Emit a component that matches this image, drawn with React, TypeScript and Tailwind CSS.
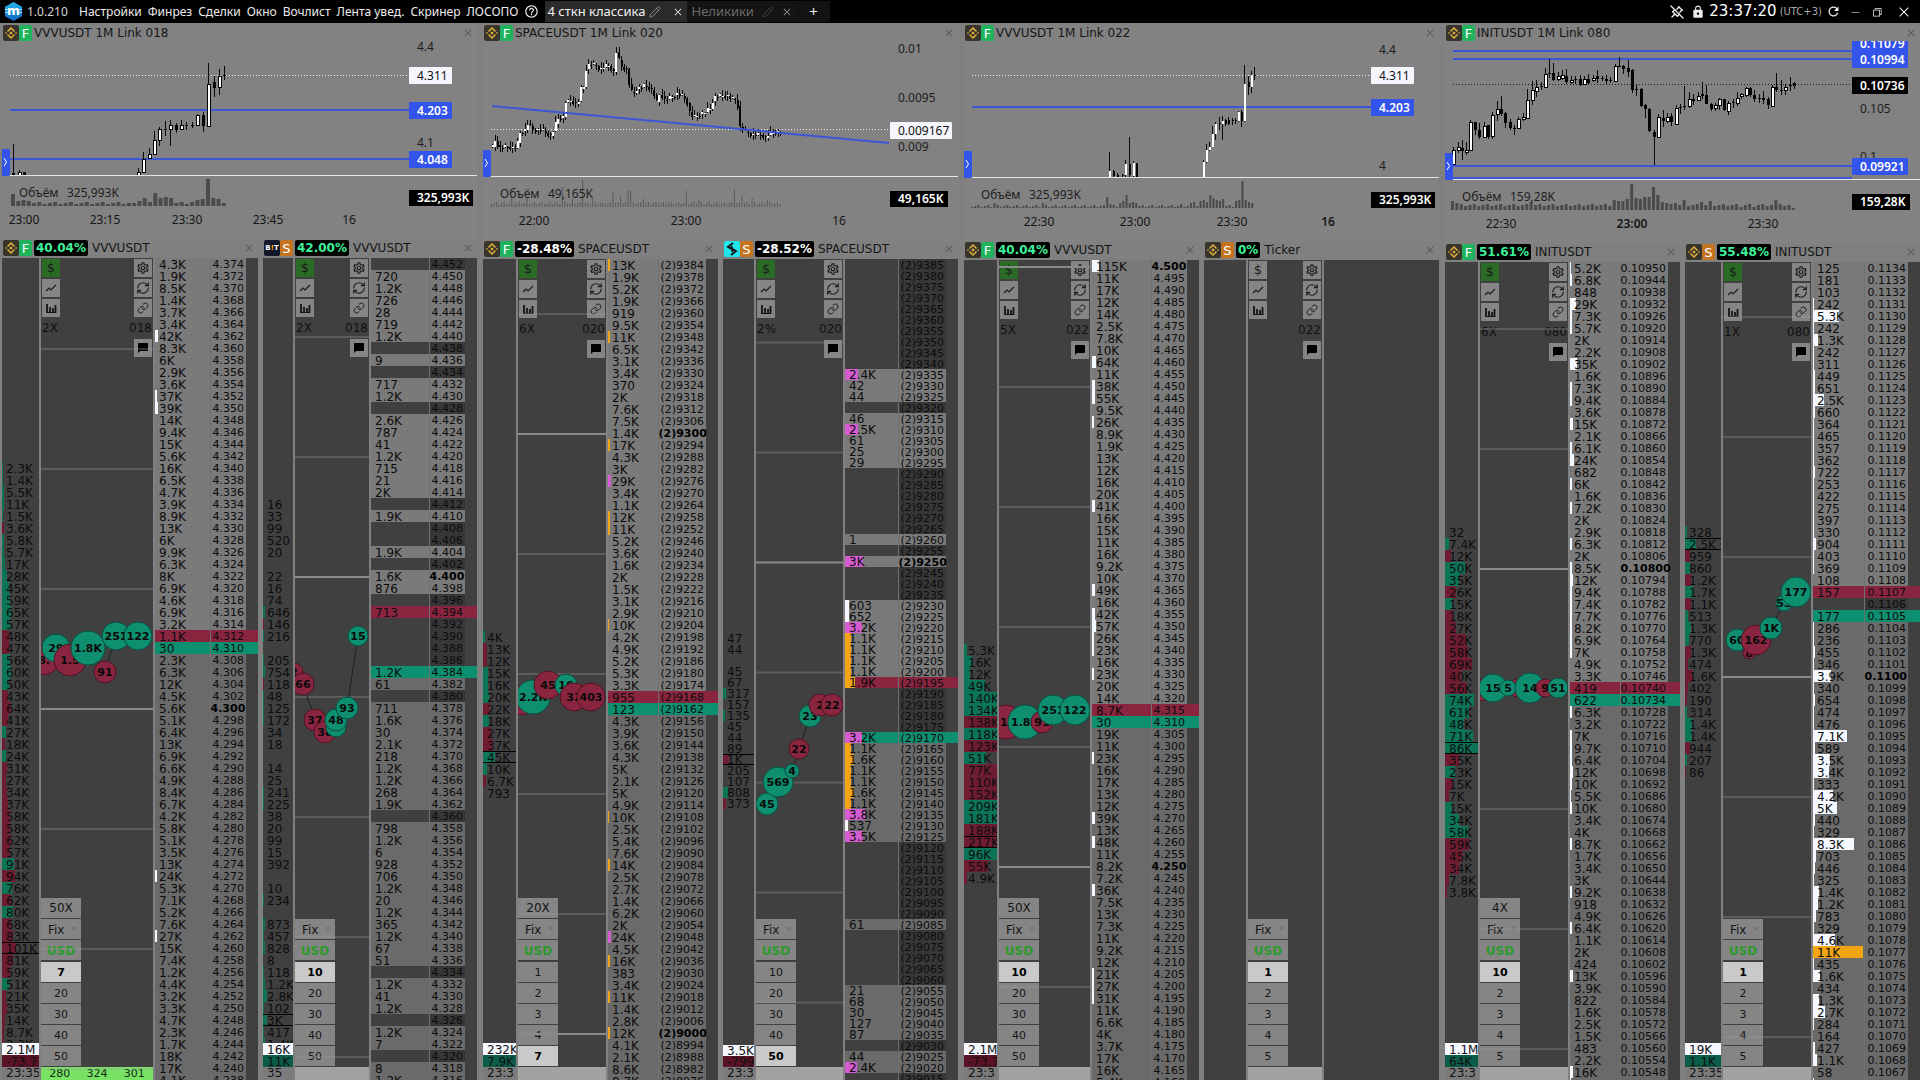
import clsx from "clsx";
import { Link, Pencil, RefreshCw } from "lucide-react";
import { MdChatBubble, MdHelpOutline, MdLock, MdOutlineSettings, MdRefresh } from "react-icons/md";
import { TbPinnedOff } from "react-icons/tb";
import { VscChromeClose, VscChromeMinimize, VscChromeRestore } from "react-icons/vsc";

type Side = "g" | "r";
type Exchange = "binance" | "bitget" | "bybit";
type Bubble = [label: string, cx: number, cy: number, r: number, side: Side];
type Candle = [x: number, high: number, low: number, top: number, bottom: number, up: number];
type Tag = { y: number; text: string; kind: "plain" | "white" | "blue" | "black"; w?: number };

type BookData = {
  exchange: Exchange;
  market: "F" | "S";
  change: string;
  ticker: string;
  scale: string;
  link: string;
  active: boolean;
  start?: number;
  step?: number;
  digits?: number;
  prefix?: string;
  levels: string;
  ask: number;
  bid: number;
  round: number[];
  grid: number;
  small?: boolean;
  clusterFrom: number;
  clusterMax: number;
  clusters: string;
  total?: [string, string, Side, string];
  bubbles: Bubble[];
  leverage?: string;
  sizes: string[];
  size: number;
  stats?: string[];
  clusterW: string;
  ladderW: string;
  priceW: string;
};

type ChartData = {
  title: string;
  dx: number;
  height: string;
  sep: number;
  tags: Tag[];
  lines: number[];
  trend?: [number, number, number, number];
  last: number;
  lastDark?: boolean;
  candles: Candle[];
  bodyW: number;
  volume: string;
  volBars: number[];
  volStep: number;
  volW: number;
  times: [number, string, boolean?][];
};

/* --------------------------------------------------------
   CHART DATA
---------------------------------------------------------*/
const vvv18: Candle[] = [
  [13, 144, 175, 173, 175, 0], [19, 170, 175, 172, 175, 1], [24, 172, 175, 172, 175, 0],
  [138, 168, 175, 172, 175, 1], [143, 152, 173, 159, 172, 1], [149, 148, 158, 154, 158, 1],
  [154, 131, 155, 140, 154, 1], [159, 127, 146, 129, 140, 1], [165, 121, 136, 129, 130, 0],
  [170, 120, 146, 125, 129, 1], [176, 123, 133, 125, 130, 0], [181, 120, 130, 125, 129, 1],
  [186, 122, 130, 125, 126, 0], [192, 122, 128, 125, 126, 0], [197, 114, 126, 115, 125, 1],
  [203, 112, 132, 115, 126, 0], [208, 63, 127, 84, 126, 1], [214, 76, 97, 82, 88, 0],
  [219, 69, 95, 76, 87, 1], [224, 66, 80, 75, 76, 0],
];

const vvv22: Candle[] = [
  [149, 152, 177, 171, 177, 1], [153, 170, 177, 171, 176, 0], [157, 173, 177, 175, 177, 0],
  [162, 174, 177, 175, 176, 0], [165, 160, 177, 164, 175, 1], [169, 137, 177, 164, 175, 0],
  [173, 161, 177, 163, 176, 1], [176, 163, 177, 163, 177, 0], [243, 160, 177, 162, 177, 1],
  [246, 144, 163, 150, 162, 1], [249, 142, 151, 147, 150, 1], [252, 126, 147, 134, 147, 1],
  [255, 122, 140, 124, 134, 1], [259, 117, 130, 123, 124, 0], [262, 116, 140, 121, 124, 1],
  [265, 119, 126, 120, 124, 0], [268, 117, 125, 120, 124, 0], [272, 118, 125, 120, 121, 0],
  [275, 118, 124, 120, 121, 0], [278, 111, 122, 112, 121, 1], [281, 110, 127, 112, 121, 0],
  [284, 65, 122, 84, 121, 1], [288, 76, 95, 82, 87, 0], [291, 71, 93, 75, 87, 1], [294, 67, 80, 75, 76, 0],
];

const init80: Candle[] = [
  [13, 147, 164, 150, 164, 1], [18, 142, 153, 147, 150, 1], [22, 140, 160, 148, 151, 0], [26, 142, 155, 150, 152, 1],
  [30, 120, 151, 122, 150, 1], [35, 122, 135, 122, 130, 0], [39, 123, 139, 130, 137, 0], [44, 122, 138, 126, 137, 1],
  [48, 125, 139, 125, 137, 0], [52, 112, 139, 115, 136, 1], [57, 101, 121, 109, 114, 1], [61, 96, 116, 109, 114, 0],
  [65, 112, 128, 113, 123, 0], [70, 119, 130, 122, 128, 0], [74, 125, 135, 128, 129, 0], [78, 117, 129, 119, 128, 1],
  [83, 113, 121, 117, 119, 1], [87, 89, 118, 100, 118, 1], [92, 81, 105, 90, 100, 1], [96, 80, 97, 87, 91, 1],
  [101, 82, 90, 86, 87, 0], [105, 68, 88, 74, 87, 1], [109, 59, 78, 73, 74, 0], [113, 63, 81, 73, 80, 0],
  [118, 72, 81, 76, 79, 1], [122, 70, 80, 75, 78, 1], [126, 69, 84, 76, 82, 0], [131, 76, 84, 80, 82, 1],
  [135, 76, 84, 79, 80, 0], [140, 75, 86, 79, 85, 0], [144, 76, 84, 79, 84, 1], [148, 74, 84, 79, 83, 0],
  [153, 75, 82, 78, 80, 1], [157, 70, 83, 76, 79, 0], [162, 76, 81, 78, 79, 0], [166, 75, 84, 79, 81, 0],
  [170, 77, 83, 80, 81, 0], [175, 64, 82, 66, 81, 1], [179, 57, 67, 66, 67, 0], [183, 65, 74, 66, 69, 0],
  [188, 60, 77, 68, 72, 0], [192, 69, 93, 70, 90, 0], [196, 85, 96, 89, 90, 0], [201, 88, 107, 89, 106, 0],
  [205, 104, 118, 105, 109, 0], [209, 108, 132, 109, 131, 0], [214, 130, 165, 132, 137, 0], [218, 114, 137, 117, 137, 1],
  [223, 110, 127, 118, 121, 0], [227, 113, 123, 117, 121, 1], [231, 113, 126, 116, 122, 0], [236, 105, 125, 108, 124, 1],
  [240, 104, 114, 107, 108, 0], [244, 86, 110, 106, 107, 0], [249, 92, 108, 99, 106, 1], [253, 94, 105, 99, 101, 0],
  [258, 92, 101, 96, 100, 1], [262, 82, 99, 94, 96, 0], [266, 85, 104, 95, 104, 0], [271, 103, 111, 104, 109, 0],
  [275, 103, 111, 105, 108, 1], [279, 98, 110, 99, 105, 1], [284, 99, 111, 99, 110, 0], [288, 101, 115, 103, 111, 1],
  [293, 99, 108, 102, 103, 0], [297, 92, 106, 98, 103, 1], [301, 93, 99, 94, 96, 1], [306, 87, 97, 88, 95, 1],
  [310, 87, 97, 88, 95, 0], [314, 90, 102, 95, 99, 0], [319, 94, 103, 98, 99, 0], [323, 91, 104, 98, 100, 0],
  [328, 97, 109, 99, 105, 0], [332, 85, 107, 87, 106, 1], [336, 73, 92, 87, 90, 0], [341, 80, 95, 90, 91, 0],
  [345, 84, 95, 87, 90, 1], [350, 77, 91, 85, 86, 0], [354, 82, 89, 83, 86, 0],
];

// dense chart: closes are interpolated between the turning points
const spacePath = [
  [12, 147], [15, 140], [18, 148], [24, 147], [36, 148], [40, 132], [45, 130], [48, 123], [52, 130], [60, 130],
  [66, 133], [71, 137], [75, 124], [78, 119], [83, 117], [85, 102], [92, 101], [97, 106], [100, 90], [104, 86],
  [106, 65], [112, 64], [120, 69], [128, 65], [134, 73], [136, 52], [141, 67], [146, 68], [149, 86], [152, 95],
  [157, 88], [165, 86], [172, 90], [177, 104], [180, 91], [183, 100], [190, 98], [196, 94], [203, 97], [207, 103],
  [210, 115], [214, 117], [222, 113], [230, 109], [233, 97], [240, 96], [247, 96], [254, 100], [257, 101],
  [259, 126], [264, 131], [272, 135], [281, 135], [286, 139], [289, 133], [298, 132], [303, 131],
];

function priceAt(x: number) {
  const i = Math.max(1, spacePath.findIndex((p) => p[0] >= x));
  const [x0, y0] = spacePath[i - 1];
  const [x1, y1] = spacePath[i];
  return y0 + ((y1 - y0) * (x - x0)) / (x1 - x0);
}

const space20: Candle[] = Array.from({ length: 115 }, (_, i) => {
  const x = 12 + i * 2.53;
  const open = priceAt(Math.max(12, x - 2.53));
  const close = priceAt(x) + ((i * 7) % 5) - 2;
  const top = Math.min(open, close);
  const bottom = Math.max(open, close, top + 1);
  return [x, top - 1 - ((i * 5) % 6), bottom + 1 + ((i * 3) % 5), top, bottom, close < open ? 1 : 0];
});

function bars(count: number, base: number, peaks: Record<number, number>) {
  return Array.from({ length: count }, (_, i) => peaks[i] ?? base + ((i * 7) % 3));
}

const charts: ChartData[] = [
  {
    title: "VVVUSDT 1M Link 018",
    dx: 2,
    height: "h-[199px]",
    sep: 175,
    lines: [110, 159],
    last: 76,
    candles: vvv18,
    bodyW: 3,
    tags: [
      { y: 47, text: "4.4", kind: "plain" },
      { y: 143, text: "4.1", kind: "plain" },
      { y: 76, text: "4.311", kind: "white", w: 43 },
      { y: 111, text: "4.203", kind: "blue", w: 43 },
      { y: 160, text: "4.048", kind: "blue", w: 43 },
    ],
    volume: "325,993K",
    volBars: bars(41, 2, {
      0: 12, 1: 5, 2: 6, 3: 5, 23: 3, 24: 5, 25: 8, 26: 4, 27: 13, 28: 8, 29: 9, 30: 8, 31: 3, 34: 4, 35: 6, 36: 7,
      37: 27, 38: 8, 39: 7, 40: 3,
    }),
    volStep: 5.27,
    volW: 4,
    times: [[24, "23:00"], [105, "23:15"], [187, "23:30"], [268, "23:45"], [349, "16"]],
  },
  {
    title: "SPACEUSDT 1M Link 020",
    dx: 3,
    height: "h-[200px]",
    sep: 176,
    lines: [],
    trend: [12, 106, 409, 143],
    last: 130,
    candles: space20,
    bodyW: 2,
    tags: [
      { y: 49, text: "0.01", kind: "plain" },
      { y: 98, text: "0.0095", kind: "plain" },
      { y: 147, text: "0.009", kind: "plain" },
      { y: 131, text: "0.009167", kind: "white", w: 62 },
    ],
    volume: "49,165K",
    volBars: bars(115, 3, {
      8: 10, 14: 9, 28: 20, 32: 9, 36: 27, 40: 9, 48: 15, 51: 11, 54: 17, 55: 16, 60: 8, 77: 16, 82: 7, 96: 18, 99: 11,
      103: 9, 109: 7,
    }),
    volStep: 2.53,
    volW: 1,
    times: [[54, "22:00"], [206, "23:00"], [359, "16"]],
  },
  {
    title: "VVVUSDT 1M Link 022",
    dx: 4,
    height: "h-[201px]",
    sep: 177,
    lines: [107],
    last: 76,
    candles: vvv22,
    bodyW: 2,
    tags: [
      { y: 50, text: "4.4", kind: "plain" },
      { y: 166, text: "4", kind: "plain" },
      { y: 76, text: "4.311", kind: "white", w: 43 },
      { y: 108, text: "4.203", kind: "blue", w: 43 },
    ],
    volume: "325,993K",
    volBars: bars(88, 1, {
      7: 5, 22: 5, 42: 11, 43: 4, 46: 5, 47: 7, 48: 13, 49: 5, 50: 6, 51: 5, 65: 4, 68: 5, 69: 6, 71: 7, 72: 8, 73: 6,
      74: 13, 75: 10, 76: 8, 77: 7, 78: 9, 82: 7, 83: 8, 84: 27, 85: 8, 86: 6, 87: 5,
    }),
    volStep: 3.22,
    volW: 2,
    times: [[79, "22:30"], [175, "23:00"], [272, "23:30"], [368, "16", true]],
  },
  {
    title: "INITUSDT 1M Link 080",
    dx: 5,
    height: "h-[203px]",
    sep: 179,
    lines: [51, 59, 166, 178],
    last: 85,
    lastDark: true,
    candles: init80,
    bodyW: 3,
    tags: [
      { y: 109, text: "0.105", kind: "plain" },
      { y: 157, text: "0.1", kind: "plain" },
      { y: 44, text: "0.11079", kind: "blue", w: 56 },
      { y: 60, text: "0.10994", kind: "blue", w: 56 },
      { y: 86, text: "0.10736", kind: "black", w: 56 },
      { y: 167, text: "0.09921", kind: "blue", w: 56 },
    ],
    volume: "159,28K",
    volBars: bars(79, 4, {
      0: 9, 1: 7, 18: 8, 37: 10, 38: 9, 39: 9, 40: 11, 41: 26, 42: 12, 43: 11, 44: 13, 45: 13, 46: 23, 47: 15, 48: 8,
      49: 7, 51: 7, 53: 10, 57: 8, 59: 9, 66: 3, 69: 3, 74: 10, 75: 6, 76: 4, 77: 5, 78: 2,
    }),
    volStep: 4.37,
    volW: 3,
    times: [[61, "22:30"], [192, "23:00", true], [323, "23:30"]],
  },
];

/* --------------------------------------------------------
   ORDER BOOK DATA
   level: volume[/colour+bar width], "-" is an empty level
---------------------------------------------------------*/
const bookGroups: { cols: string; books: BookData[] }[] = [
  {
    cols: "grid-cols-[256fr_214fr]",
    books: [
      {
        exchange: "binance", market: "F", change: "40.04%", ticker: "VVVUSDT", scale: "2X", link: "018", active: true,
        start: 4.374, step: 0.002, digits: 3,
        levels:
          "4.3K 1.9K 8.5K 1.4K 3.7K 3.4K 42K/w3 8.3K 6K 2.9K 3.6K 37K/w2 39K/w3 14K 9.4K 15K 5.6K 16K 6.5K 4.7K 3.9K 8.9K 13K 6K 9.9K 6.3K 8K 6.9K 4.6K 6.9K 3.2K 1.1K 30 2.3K 6.3K 12K 4.5K 5.6K 5.1K 6.4K 13K 6.9K 6.6K 4.9K 8.4K 6.7K 4.2K 5.8K 5.1K 3.5K 13K 24K/w2 5.3K 7.1K 5.2K 7.6K 27K/w2 15K 7.4K 1.2K 4.4K 3.2K 3.3K 4.7K 2.3K 1.7K 18K 17K 4.1K",
        ask: 31, bid: 32, round: [37], grid: 7,
        clusterFrom: 17, clusterMax: 300,
        clusters:
          "2.3K/g 1.4K/g 5.5K/g 11K/g 1.5K/g 3.6K/r 5.8K/g 5.7K/g 17K/g 28K/g 45K/g 59K/g 65K/g 57K/g 48K/r 47K/r 56K/g 60K/g 50K/g 43K/r 64K/r 41K/r 27K/g 18K/r 24K/g 31K/r 27K/r 34K/r 37K/r 58K/r 58K/r 62K/r 57K/r 91K/g 94K/r 76K/g 62K/r 80K/g 68K/r 83K/r 101K/r! 81K/r 59K/r 51K/g 21K/r 35K/r 14K/r 8.7K/r 3.3K/r",
        total: ["2.1M", "-73.7", "r", "23:35"],
        bubbles: [
          ["8.", 3, 402, 15, "r"], ["29", 15, 390, 14, "g"], ["1.5", 29, 402, 16, "r"], ["1.8K", 47, 390, 17, "g"],
          ["91", 64, 414, 11, "r"], ["251", 75, 378, 14, "g"], ["122", 97, 378, 14, "g"],
        ],
        leverage: "50X", sizes: ["7", "20", "30", "40", "50"], size: 0, stats: ["280", "324", "301"],
        clusterW: "w-[39px]", ladderW: "w-[105px]", priceW: "w-9",
      },
      {
        exchange: "bitget", market: "S", change: "42.00%", ticker: "VVVUSDT", scale: "2X", link: "018", active: true,
        start: 4.452, step: 0.002, digits: 3,
        levels:
          "- 720 1.2K 726 28 719 1.2K - 9 - 717 1.2K - 2.6K 787 41 1.2K 715 21 2K - 1.9K - - 1.9K - 1.6K 876 - 713 - - - - 1.2K 61 - 711 1.6K 30 2.1K 218 1.2K 1.2K 268 1.9K - 798 1.2K 6 928 706 1.2K 20 1.2K 365 1.2K 67 51 - 1.2K 41 1.2K - 1.2K 7 - 8 1.2K",
        ask: 29, bid: 34, round: [26], grid: 6,
        clusterFrom: 20, clusterMax: 30,
        clusters:
          "16 33 99 520 20 - 22 16 74 646/g 146/r 216/g - 205/g 754/g 118/r 48/g 125/g 172/g 34 18 - 14 25 241/g 225/g 38 20 99 15 392 - 10 234/g - 873/g 457/g 828/g 8 118/g 1.2K/g 2.8K/g 102/g 3K/g! 417/g 1.4K/g",
        total: ["16K", "11K", "g", "35"],
        bubbles: [
          ["2", -1, 414, 9, "r"], ["66", 8, 426, 11, "r"], ["37", 20, 462, 11, "r"], ["38", 30, 474, 11, "r"],
          ["", 41, 469, 10, "g"], ["48", 41, 462, 11, "g"], ["93", 52, 450, 11, "g"], ["15", 63, 378, 10, "g"],
        ],
        sizes: ["10", "20", "30", "40", "50"], size: 0,
        clusterW: "w-8", ladderW: "w-[108px]", priceW: "w-9",
      },
    ],
  },
  {
    cols: "grid-cols-2",
    books: [
      {
        exchange: "binance", market: "F", change: "-28.48%", ticker: "SPACEUSDT", scale: "6X", link: "020", active: true,
        start: 9384, step: 6, digits: 0, prefix: "(2)",
        levels:
          "13K/o2 1.9K 5.2K 1.9K 919 9.5K 11K/o2 6.5K 3.1K 3.4K 370 2K 7.6K 7.5K 1.4K 17K/o2 4.3K 3K 29K/p3 3.4K 1.1K 12K/o2 11K/o2 5.2K 3.6K 1.6K 2K 1.5K 3.1K 2.9K 10K/o1 4.2K 4.9K 5.2K 5.3K 3.3K 955 123 4.3K 3.9K 3.6K 4.3K 5K 2.1K 5K 4.9K 10K/o1 2.5K 5.4K 7.6K 14K/o2 2.5K 2.7K 1.4K 6.2K 2K 24K/p3 4.5K 16K/o2 383 3.4K 11K/o2 1.4K 2.8K 12K/o2 4.1K 2.1K 8.6K 8.7K",
        ask: 36, bid: 37, round: [14, 64], grid: 4,
        clusterFrom: 31, clusterMax: 130,
        clusters: "4K/g 13K/r 12K/r 15K/g 16K/g 20K/g 22K/r 18K/g 27K/r 37K/r 45K/g! 10K/g 6.7K/r 793",
        total: ["232K", "7.9K", "g", "23:3"],
        bubbles: [
          ["", 4, 441, 15, "r"], ["2.2K", 15, 438, 17, "g"], ["45", 30, 426, 14, "r"], ["16", 48, 426, 11, "g"],
          ["32", 56, 438, 14, "r"], ["403", 73, 438, 14, "r"],
        ],
        leverage: "20X", sizes: ["1", "2", "3", "4", "7"], size: 4,
        clusterW: "w-[35px]", ladderW: "w-28", priceW: "w-12",
      },
      {
        exchange: "bybit", market: "S", change: "-28.52%", ticker: "SPACEUSDT", scale: "2%", link: "020", active: true,
        start: 9385, step: 5, digits: 0, prefix: "(2)", small: true,
        levels:
          "- - - - - - - - - - 2.4K/p13 42 44 - 46 2.5K/p13 61 25 29 - - - - - - 1 - 3K/p18 - - - 603/w4 652/w4 3.2K/p17 1.1K/o6 1.1K/o6 1.1K/o6 1.1K/o6 1.9K/o10 - - - - 3.2K/p17 1.1K/o6 1.6K/o9 1.1K/o6 1.1K/o6 1.6K/o9 1.1K/o6 3.8K/p20 537/w3 3.5K/p18 - - - - - - - 61 - - - - - 21 68 30 127 87 - 44 2.4K/p12 -",
        ask: 38, bid: 43, round: [27], grid: 7,
        clusterFrom: 34, clusterMax: 6,
        clusters: "47 44 - 45 67 317/g 157 135/g 45 44 89 1K/r! 205 107 808/g 373/r",
        total: ["3.5K", "-799", "r", "23:3"],
        bubbles: [
          ["45", 11, 545, 11, "g"], ["569", 22, 523, 15, "g"], ["4", 36, 512, 7, "g"], ["22", 43, 490, 10, "r"],
          ["23", 54, 457, 11, "g"], ["2", 64, 446, 11, "r"], ["22", 76, 446, 11, "r"],
        ],
        sizes: ["10", "20", "30", "40", "50"], size: 4,
        clusterW: "w-[33px]", ladderW: "w-[115px]", priceW: "w-12",
      },
    ],
  },
  {
    cols: "grid-cols-2",
    books: [
      {
        exchange: "binance", market: "F", change: "40.04%", ticker: "VVVUSDT", scale: "5X", link: "022", active: true,
        start: 4.5, step: 0.005, digits: 3,
        levels:
          "115K/w7 11K 17K 12K 14K 2.5K 7.8K 10K 64K/w4 11K 38K/w3 55K/w3 9.5K 26K/w2 8.9K 1.9K 13K 12K 16K 20K 41K/w3 16K 15K 11K 16K 9.2K 10K 49K/w3 16K 42K/w3 57K/w4 26K/w2 23K/w2 16K 23K/w2 20K 14K 8.7K 30 19K 11K 23K/w2 16K 17K 13K 12K 39K/w3 13K 48K/w3 11K 8.2K 7.2K 36K/w3 7.5K 13K 7.3K 11K 9.2K 12K 21K/w2 27K/w2 31K/w2 11K 6.6K 4K 3.7K 17K 16K 5.4K",
        ask: 37, bid: 38, round: [0, 50], grid: 0,
        clusterFrom: 32, clusterMax: 80,
        clusters:
          "5.3K/g 16K/g 12K/g 49K/g 140K/g 134K/g 138K/r 118K/g 123K/r 51K/g 77K/r 110K/r 152K/r 209K/g 181K/g 188K/r 217K/r! 96K/g 55K/r 4.9K/r",
        total: ["2.1M", "-73.7", "r", "23:3"],
        bubbles: [
          ["1.", 7, 462, 17, "r"], ["1.8K", 26, 462, 17, "g"], ["91", 43, 462, 11, "r"], ["251", 54, 450, 15, "g"],
          ["122", 76, 450, 15, "g"],
        ],
        leverage: "50X", sizes: ["10", "20", "30", "40", "50"], size: 0,
        clusterW: "w-[35px]", ladderW: "w-[109px]", priceW: "w-9",
      },
      {
        exchange: "binance", market: "S", change: "0%", ticker: "Ticker", scale: "", link: "022", active: false,
        levels: "", ask: -1, bid: -1, round: [], grid: -1,
        clusterFrom: 0, clusterMax: 1, clusters: "", bubbles: [],
        sizes: ["1", "2", "3", "4", "5"], size: 0,
        clusterW: "w-11", ladderW: "w-[117px]", priceW: "w-9",
      },
    ],
  },
  {
    cols: "grid-cols-2",
    books: [
      {
        exchange: "binance", market: "F", change: "51.61%", ticker: "INITUSDT", scale: "6X", link: "080", active: true,
        start: 0.1095, step: 0.00006, digits: 5,
        levels:
          "5.2K/w1 6.8K/w2 848 29K/w6 7.3K/w2 5.7K/w2 2K 2.2K 35K/w7 1.6K 7.3K/w2 9.4K/w2 3.6K 15K/w3 2.1K 6.1K/w2 24K/w4 682 6K/w2 1.6K 7.2K/w2 2K 2.9K 6.3K/w2 2K 8.5K/w2 12K/w3 9.4K/w2 7.4K/w2 7.7K/w2 8.2K/w2 6.9K/w2 7K/w2 4.9K 3.3K 419 622 6.3K/w2 3.2K 7K/w2 9.7K/w2 6.4K/w2 12K/w3 10K/w2 5.5K/w1 10K/w2 3.4K 4K 8.7K/w2 1.7K 3.4K 3K 9.2K/w2 918 4.9K 6.4K/w2 1.1K 2K 424 13K/w3 3.9K 822 1.6K 2.5K 1.5K 483 2.2K 16K/w3 3.1K/w1",
        ask: 35, bid: 36, round: [25], grid: 5,
        clusterFrom: 22, clusterMax: 86,
        clusters:
          "32 7.4K/g 12K/r 50K/g 35K/g 26K/r 15K/g 18K/r 27K/r 52K/r 58K/r 69K/r 40K/r 56K/r 74K/g 61K/g 48K/g 71K/g 86K/g! 35K/r 23K/g 15K/r 7K/r 15K/g 34K/g 58K/g 59K/r 45K/r 34K/r 7.8K/r 3.8K/r",
        total: ["1.1M", "64K", "g", "23:3"],
        bubbles: [
          ["", 2, 428, 11, "r"], ["15", 13, 426, 14, "g"], ["1", 37, 426, 9, "r"], ["5", 28, 426, 8, "g"],
          ["14", 50, 426, 15, "g"], ["9", 65, 426, 9, "r"], ["51", 78, 426, 10, "g"],
        ],
        leverage: "4X", sizes: ["10", "2", "3", "4", "5"], size: 0,
        clusterW: "w-[35px]", ladderW: "w-28", priceW: "w-12",
      },
      {
        exchange: "binance", market: "S", change: "55.48%", ticker: "INITUSDT", scale: "1X", link: "080", active: true,
        start: 0.1134, step: 0.0001, digits: 4,
        levels:
          "125 181 103 242/w1 5.3K/w26 242/w1 1.3K/w5 242/w1 311/w1 449/w2 651/w2 2.5K/w11 660/w2 364/w1 465/w1 357/w1 362/w1 722/w2 253/w1 422/w1 275/w1 397/w1 330/w1 904/w3 403/w1 369/w1 108 157 - 177 286/w1 236/w1 455/w2 346/w1 3.9K/w18 340/w1 654/w2 474/w1 476/w1 7.1K/w34 589/w2 3.5K/w17 3.4K/w16 333/w1 4.2K/w20 5K/w24 440/w2 329/w1 8.3K/w41 703/w3 446/w2 325/w1 1.4K/w6 1.2K/w5 783/w3 329/w1 4.6K/w22 11K/o50 435/w1 1.6K/w7 434 1.3K/w6 2.7K/w12 284/w1 164 427/w2 1.1K/w4 58 310/w1",
        ask: 27, bid: 29, round: [34], grid: 4,
        clusterFrom: 22, clusterMax: 8.75,
        clusters:
          "328/g 2.5K/g! 959/r 860/g 1.2K/r 1.7K/g 1.1K/r 513/g 1.3K/g 770/g 1.3K/r 474/r 1.6K/r 402/r 190/r 314/g 1.4K/g 1.4K/g 944/r 207/g 86/r",
        total: ["19K", "1.1K", "g", "23:35"],
        bubbles: [
          ["60", 14, 378, 11, "g"], ["8", 26, 391, 6, "r"], ["162", 33, 378, 15, "r"], ["1K", 48, 366, 11, "g"],
          ["53", 61, 341, 8, "g"], ["177", 73, 330, 15, "g"],
        ],
        sizes: ["1", "2", "3", "4", "5"], size: 0,
        clusterW: "w-[38px]", ladderW: "w-[109px]", priceW: "w-11",
      },
    ],
  },
];

/* --------------------------------------------------------
   ICONS
---------------------------------------------------------*/
function AppLogo() {
  return (
    <svg className="h-[19px] w-[19px] shrink-0" viewBox="0 0 20 20">
      <defs>
        <linearGradient id="logo" x1="0" y1="0" x2="0" y2="1">
          <stop offset="0" stopColor="#25b7ee" />
          <stop offset="1" stopColor="#1263c4" />
        </linearGradient>
      </defs>
      <path d="M10 0l9 5v10l-9 5-9-5V5z" fill="url(#logo)" />
      <path d="M1 8h3M1 11h3M16 8h3M16 11h3" stroke="#bfe6ff" />
      <text x="10" y="14" textAnchor="middle" fontSize="13" fontWeight="700" fill="#fff" fontFamily="DejaVu Sans">
        m
      </text>
    </svg>
  );
}

function ExchangeIcon({ name }: { name: Exchange }) {
  if (name === "bitget") {
    return (
      <span className="flex h-4 w-4 items-center justify-center rounded-xs bg-[#14182b] text-[7px] leading-none font-bold text-white">
        B<span className="text-amber-400">!</span>T
      </span>
    );
  }
  if (name === "bybit") {
    return (
      <svg className="h-4 w-4" viewBox="0 0 16 16">
        <rect width="16" height="16" rx="2" fill="#22e6ee" />
        <path d="M9 2L4 6l5 3-1.500 1.500M7 14l5-4-5-3 1.500-1.500" fill="none" stroke="#10181c" strokeWidth="2" />
      </svg>
    );
  }
  return (
    <svg className="h-4 w-4" viewBox="0 0 16 16">
      <rect width="16" height="16" rx="2" fill="#38342c" />
      <path d="M4.500 6.500L8 3l3.500 3.500M4.500 9.500L8 13l3.500-3.500" fill="none" stroke="#e3b23c" strokeWidth="1.500" />
      <path d="M8 6.300L9.700 8 8 9.700 6.300 8zM3 7l1 1-1 1-1-1zM13 7l1 1-1 1-1-1z" fill="#e3b23c" />
    </svg>
  );
}

function MarketIcon({ market }: { market: "F" | "S" }) {
  return (
    <span
      className={clsx(
        "flex h-4 w-[13px] items-center justify-center rounded-xs text-[13px] leading-none text-white",
        market === "F" ? "bg-[#1fb35d]" : "bg-[#c4731f]"
      )}
    >
      {market}
    </span>
  );
}

function LineIcon() {
  return (
    <svg className="h-3 w-3" viewBox="0 0 12 12">
      <path d="M1 9l3-3 2 2 5-5" fill="none" stroke="#1c1c1c" strokeWidth="1.200" />
    </svg>
  );
}

function BarsIcon() {
  return (
    <svg className="h-3 w-3" viewBox="0 0 12 12">
      <path d="M2 2v8M5 5v5M8 6v4M10.500 3v7" stroke="#151515" strokeWidth="1.800" />
      <path d="M1 10.500h10.500" stroke="#151515" />
    </svg>
  );
}

/* --------------------------------------------------------
   TOP BAR
---------------------------------------------------------*/
const menu = ["Настройки", "Финрез", "Сделки", "Окно", "Вочлист", "Лента увед.", "Скринер", "ЛОСОПО"];

function TopBar() {
  return (
    <header className="flex h-[23px] shrink-0 items-center bg-black pl-1 font-['Noto_Sans'] text-xs text-[#ececec]">
      <AppLogo />
      <span className="ml-1 w-[52px] text-[#d5d5d5]">1.0.210</span>
      <nav className="flex gap-1.5">
        {menu.map((m) => (
          <button key={m}>{m}</button>
        ))}
      </nav>
      <button aria-label="Помощь" className="mx-1.5">
        <MdHelpOutline className="h-[15px] w-[15px]" />
      </button>
      <div className="flex h-[21px] w-[142px] items-center bg-[#2b2b2b] px-0.5 text-[13px]">
        <button className="text-[#f0f0f0]">4 сткн классика</button>
        <Pencil className="ml-1 h-3 w-3 text-[#a5a5a5]" strokeWidth={1.5} />
        <button aria-label="Закрыть" className="mr-0.5 ml-auto">
          <VscChromeClose className="h-2.5 w-2.5" />
        </button>
      </div>
      <div className="flex h-[21px] w-[109px] items-center bg-[#141414] px-1 text-[13px] text-[#6a6a6a]">
        <button>Неликики</button>
        <Pencil className="ml-2 h-3 w-3 text-[#4c4c4c]" strokeWidth={1.5} />
        <button aria-label="Закрыть" className="ml-auto">
          <VscChromeClose className="h-2.5 w-2.5 text-[#9a9a9a]" />
        </button>
      </div>
      <button className="h-[21px] w-[34px] bg-[#121212] text-[15px] leading-none">+</button>

      <div className="ml-auto flex items-center pr-[9px]">
        <TbPinnedOff className="mr-1.5 h-4 w-4" />
        <MdLock className="mr-1 h-3.5 w-3.5" />
        <time className="mr-[3px] font-['DejaVu_Sans'] text-[15px] leading-none text-white">23:37:20</time>
        <span className="mr-1 font-['DejaVu_Sans'] text-[10px] text-[#a8a8a8]">(UTC+3)</span>
        <MdRefresh className="mr-2 h-[15px] w-[15px]" />
        <VscChromeMinimize className="mr-2.5 h-3 w-3 text-[#b0b0b0]" />
        <VscChromeRestore className="mr-3.5 h-3 w-3" />
        <VscChromeClose className="h-3.5 w-3.5" />
      </div>
    </header>
  );
}

/* --------------------------------------------------------
   CHART
---------------------------------------------------------*/
const tagFill = { plain: "none", white: "#f4f6fb", blue: "#3354ea", black: "#000" };
const tagText = { plain: "#1d1d1d", white: "#111", blue: "#fff", black: "#fff" };

function Chart({ chart }: { chart: ChartData }) {
  const { dx, sep } = chart;
  const axis = 407 + dx;
  const volBase = sep + 31;
  return (
    <section className="bg-[#828282]">
      <div className="flex h-[18px] items-center pt-0.5 pl-px text-xs leading-none text-[#161616]">
        <ExchangeIcon name="binance" />
        <MarketIcon market="F" />
        <h2 className="ml-0.5">{chart.title}</h2>
        <button aria-label="Закрыть" className="mr-1 ml-auto">
          <VscChromeClose className="h-2.5 w-2.5 text-[#555]" />
        </button>
      </div>
      <svg className={clsx("block w-full overflow-hidden font-['Noto_Sans'] text-xs", chart.height)}>
        <g transform={`translate(${-dx} -41)`}>
          {chart.lines.map((y) => (
            <path key={y} d={`M${dx + 8} ${y}H${axis}`} stroke="#3b57d6" strokeWidth="2" />
          ))}
          <path
            d={`M${dx + 8} ${chart.last - 0.5}H${axis}`}
            stroke={chart.lastDark ? "#222" : "#f0f0f0"}
            strokeDasharray="1 2"
          />
          {chart.candles.map(([x, high, low, top, bottom, up], i) => (
            <g key={i} shapeRendering="crispEdges">
              <path d={`M${x + 0.5} ${high}V${low}`} stroke="#0a0a0a" />
              <rect
                x={x - chart.bodyW / 2 + 0.5}
                y={top}
                width={chart.bodyW}
                height={Math.max(1, bottom - top)}
                fill={up ? "#fff" : "#050505"}
                stroke={up && chart.bodyW < 3 ? "none" : "#050505"}
                strokeWidth={up ? 1 : 0}
              />
            </g>
          ))}
          {chart.trend && (
            <path
              d={`M${chart.trend[0]} ${chart.trend[1]}L${chart.trend[2]} ${chart.trend[3]}`}
              stroke="#3b57d6"
              strokeWidth="2"
            />
          )}
          {chart.tags.map((t) => (
            <g key={t.text}>
              <rect x={axis} y={t.y - 9} width={t.w ?? 0} height={17} fill={tagFill[t.kind]} rx={1} />
              <text
                x={axis + 8}
                y={t.y + 4}
                fill={tagText[t.kind]}
                fontWeight={t.kind === "blue" || t.kind === "black" ? 600 : 400}
              >
                {t.text}
              </text>
            </g>
          ))}
          <rect x={0} y={sep + 1} width="120%" height={80} fill="#828282" />
          <path d={`M${dx + 8} ${sep + 0.5}H600`} stroke="#e4e4e4" />
          <rect x={dx - 1} y={sep - 26} width={9} height={27} rx={2} fill="#3354ea" />
          <path d={`M${dx + 2} ${sep - 17}l2.500 4-2.500 4`} fill="none" stroke="#fff" />
          {chart.volBars.map((h, i) => (
            <rect
              key={i}
              x={11 + i * chart.volStep}
              y={volBase - h}
              width={chart.volW}
              height={h}
              fill={chart.volW === 1 ? "#5a5a5a" : "#4b4b4b"}
            />
          ))}
          <text x={dx + 17} y={sep + 22} fill="#1f1f1f">
            Объём
          </text>
          <text x={dx + 65} y={sep + 22} fill="#1f1f1f">
            {chart.volume}
          </text>
          <rect x={axis} y={sep + 15} width={chart.volume.length * 6 + 16} height={16} fill="#000" />
          <text x={axis + 8} y={sep + 27} fill="#fff" fontWeight={600}>
            {chart.volume}
          </text>
          {chart.times.map(([x, label, bold]) => (
            <text key={label} x={x} y={sep + 49} textAnchor="middle" fill="#161616" fontWeight={bold ? 600 : 400}>
              {label}
            </text>
          ))}
        </g>
      </svg>
    </section>
  );
}

/* --------------------------------------------------------
   ORDER BOOK
---------------------------------------------------------*/
const barColor: Record<string, string> = {
  w: "bg-[#f4f8ff]",
  o: "bg-[#f2a413]",
  p: "bg-[#d45cd0]",
};

function toNumber(v: string) {
  return v.endsWith("K") ? parseFloat(v) : parseFloat(v) / 1000;
}

function Clusters({ book }: { book: BookData }) {
  const rowH = book.small ? "h-[11px] leading-[9px]" : "h-3 leading-[10px]";
  const rows = book.clusters ? book.clusters.split(" ") : [];
  return (
    <div className={clsx("flex shrink-0 flex-col border-r-2 border-[#808080] bg-[#404040]", book.clusterW)}>
      <ul className="min-h-0 flex-1 overflow-hidden text-xs text-[#0d0d0d]">
        {Array.from({ length: book.clusterFrom }, (_, i) => (
          <li key={"e" + i} className={rowH} />
        ))}
        {rows.map((row, i) => {
          const [value, flags = ""] = row.split("/");
          const peak = flags.includes("!");
          return (
            <li
              key={i}
              className={clsx(
                "relative overflow-hidden pl-1 whitespace-nowrap",
                rowH,
                peak ? "border-y border-black pt-px" : "pt-0.5"
              )}
            >
              {flags && (
                <span
                  className={clsx("absolute inset-y-0 left-0", flags[0] === "g" ? "bg-[#0c7558]" : "bg-[#6e1c31]")}
                  style={{ width: `${Math.min(100, (toNumber(value) / book.clusterMax) * 100 + 3)}%` }}
                />
              )}
              <span className="relative">{value === "-" ? "" : value}</span>
            </li>
          );
        })}
      </ul>
      {book.total && (
        <div className="shrink-0 overflow-hidden text-xs whitespace-nowrap text-[#111]">
          <p className={clsx("bg-[#f6f8ff] pt-0.5 pl-1", rowH)}>{book.total[0]}</p>
          <p
            className={clsx(
              "overflow-hidden pt-0.5 pl-1",
              rowH,
              book.total[2] === "g" ? "bg-[#0b5d49]" : "bg-[#5a1226]"
            )}
          >
            {book.total[1]}
          </p>
          <p className="h-[13px] overflow-hidden bg-[#7b7b7b] pl-1 leading-[13px]">{book.total[3]}</p>
        </div>
      )}
    </div>
  );
}

const toolClass = "flex h-[18px] w-[18px] items-center justify-center text-[#1c1c1c]";

function Ticks({ book }: { book: BookData }) {
  const rowH = book.small ? 11 : 12;
  const gridRows = book.grid < 0 ? [] : [0, 1, 2, 3, 4, 5, 6].map((n) => book.grid + n * 10).filter((n) => n < 68);
  return (
    <div className="relative flex min-w-0 flex-1 flex-col overflow-hidden bg-[#404040]">
      <div className="flex justify-between px-px pt-px">
        <div className="flex flex-col gap-0.5">
          <button className={clsx(toolClass, "text-[13px]", book.active ? "bg-[#2a6b26]" : "bg-[#858585]")}>$</button>
          <button aria-label="График" className={clsx(toolClass, "bg-[#858585]")}>
            <LineIcon />
          </button>
          <button aria-label="Объёмы" className={clsx(toolClass, "bg-[#858585]")}>
            <BarsIcon />
          </button>
          <span className="text-xs leading-[18px] text-[#111]">{book.scale}</span>
        </div>
        <div className="flex flex-col items-end gap-0.5">
          <button aria-label="Настройки стакана" className={clsx(toolClass, "bg-[#858585]")}>
            <MdOutlineSettings className="h-3.5 w-3.5" />
          </button>
          <button aria-label="Обновить" className={clsx(toolClass, "bg-[#858585]")}>
            <RefreshCw className="h-3.5 w-3.5" strokeWidth={2} />
          </button>
          <button aria-label="Связка" className={clsx(toolClass, "bg-[#858585]")}>
            <Link className="h-3 w-3" strokeWidth={2} />
          </button>
          <span className="text-xs leading-[18px] text-[#111]">{book.link}</span>
          <button aria-label="Заметка" className={clsx(toolClass, "bg-[#858585]")}>
            <MdChatBubble className="h-3 w-3 text-black" />
          </button>
        </div>
      </div>

      <div className="mt-auto flex w-10 flex-col text-[11px] text-[#151515]">
        {book.leverage && (
          <button className="h-[21px] border-b border-[#404040] bg-[#858585] text-xs">{book.leverage}</button>
        )}
        <div className="relative h-[21px] border-b border-[#404040] bg-[#858585]">
          <select aria-label="Режим" className="h-full w-full appearance-none pt-px pl-[7px] text-xs outline-none">
            <option>Fix</option>
          </select>
          <span className="pointer-events-none absolute top-2 right-1 border-x-3 border-t-4 border-x-transparent border-t-[#767676]" />
        </div>
        <button className="h-[22px] border-b-2 border-[#404040] bg-[#858585] pt-px text-xs font-bold text-[#2c9a2c]">
          USD
        </button>
        {book.sizes.map((s, i) => (
          <button
            key={s}
            className={clsx(
              "h-[21px] border-b border-[#404040] pt-0.5",
              i === book.size ? "bg-[#c9c9c9] font-bold text-black" : "bg-[#858585]"
            )}
          >
            {s}
          </button>
        ))}
      </div>
      <div
        className={clsx(
          "flex h-[13px] shrink-0 items-center justify-around text-[11px] leading-none text-[#0f2a0f]",
          book.stats ? "bg-[#78e265]" : "bg-[#a2a2a2]"
        )}
      >
        {book.stats?.map((s) => <span key={s}>{s}</span>)}
      </div>

      <svg className="pointer-events-none absolute inset-0 h-full w-full">
        {gridRows.map((n) => (
          <rect
            key={n}
            y={n * rowH + rowH / 2}
            width="100%"
            height={2}
            fill={book.round.includes(n) ? "#8a8a8a" : "#a0a0a0"}
            opacity={book.round.includes(n) ? 1 : 0.3}
          />
        ))}
        <polyline points={book.bubbles.map((b) => `${b[1]},${b[2]}`).join(" ")} fill="none" stroke="#202020" />
        {book.bubbles.map(([label, cx, cy, r, side], i) => (
          <g key={i}>
            <circle
              cx={cx}
              cy={cy}
              r={r}
              fill={side === "g" ? "#0e8f70" : "#8a2540"}
              stroke={side === "g" ? "#0a4f40" : "#4d1424"}
            />
            <text x={cx} y={cy + 4} textAnchor="middle" fontSize="11" fontWeight="700" fill="#0a0a0a">
              {label}
            </text>
          </g>
        ))}
      </svg>
    </div>
  );
}

function Ladder({ book }: { book: BookData }) {
  const rows = book.levels ? book.levels.split(" ") : [];
  const rowH = book.small ? "h-[11px] leading-[9px]" : "h-3 leading-[10px]";
  return (
    <div className={clsx("shrink-0 overflow-hidden border-l-2 border-[#808080] bg-[#404040]", book.ladderW)}>
      <table className="w-full table-fixed border-collapse text-xs text-[#0c0c0c]">
        <colgroup>
          <col />
          <col className={book.priceW} />
          <col className="w-3" />
        </colgroup>
        <tbody>
          {rows.map((row, i) => {
            const [value, mark] = row.split("/");
            const empty = value === "-";
            const side = i === book.ask ? "bg-[#8a2540]" : i === book.bid ? "bg-[#0e8f70]" : "";
            const filled = i < book.ask ? "bg-[#7a7a7a]" : "bg-[#6a6a6a]";
            const price = (book.prefix ?? "") + (book.start! - book.step! * i).toFixed(book.digits);
            return (
              <tr key={i} className={clsx(rowH, side)}>
                <td className={clsx("relative p-0 pt-0.5 pl-1", !side && !empty && filled)}>
                  {mark && (
                    <span
                      className={clsx("absolute inset-y-0 left-0", barColor[mark[0]])}
                      style={{ width: Number(mark.slice(1)) }}
                    />
                  )}
                  <span className="relative block whitespace-nowrap">{empty ? "" : value}</span>
                </td>
                <td
                  className={clsx(
                    "border-l border-[#707070] p-0 pt-0.5 pr-0.5 text-right text-[11px] whitespace-nowrap",
                    !side && (empty ? "bg-[#373737]" : filled),
                    book.round.includes(i) && "font-bold text-black"
                  )}
                >
                  {price}
                </td>
                <td className="p-0" />
              </tr>
            );
          })}
        </tbody>
      </table>
    </div>
  );
}

function Book({ book }: { book: BookData }) {
  return (
    <section className="flex min-h-0 min-w-0 flex-col">
      <div className="flex h-[18px] shrink-0 items-center pb-0.5 pl-px text-xs leading-none text-[#161616]">
        <ExchangeIcon name={book.exchange} />
        <MarketIcon market={book.market} />
        <span
          className={clsx(
            "ml-0.5 flex h-4 items-center rounded-xs bg-black px-0.5 font-bold",
            book.change.startsWith("-") ? "text-white" : "text-[#3df29a]"
          )}
        >
          {book.change}
        </span>
        <h3 className="ml-1">{book.ticker}</h3>
        <button aria-label="Закрыть" className="mr-1 ml-auto">
          <VscChromeClose className="h-2.5 w-2.5 text-[#555]" />
        </button>
      </div>
      <div className="flex min-h-0 flex-1">
        <Clusters book={book} />
        <Ticks book={book} />
        <Ladder book={book} />
      </div>
    </section>
  );
}

export default function App() {
  return (
    <div className="flex h-screen flex-col overflow-hidden bg-[#808080] font-['DejaVu_Sans',sans-serif]">
      <TopBar />
      <main className="flex min-h-0 flex-1 gap-1">
        {bookGroups.map((group, i) => (
          <div key={i} className="flex min-w-0 flex-1 flex-col pl-0.5">
            <Chart chart={charts[i]} />
            <div className={clsx("grid min-h-0 flex-1 grid-rows-1 gap-[5px]", group.cols)}>
              {group.books.map((book, j) => (
                <Book key={j} book={book} />
              ))}
            </div>
          </div>
        ))}
      </main>
    </div>
  );
}
